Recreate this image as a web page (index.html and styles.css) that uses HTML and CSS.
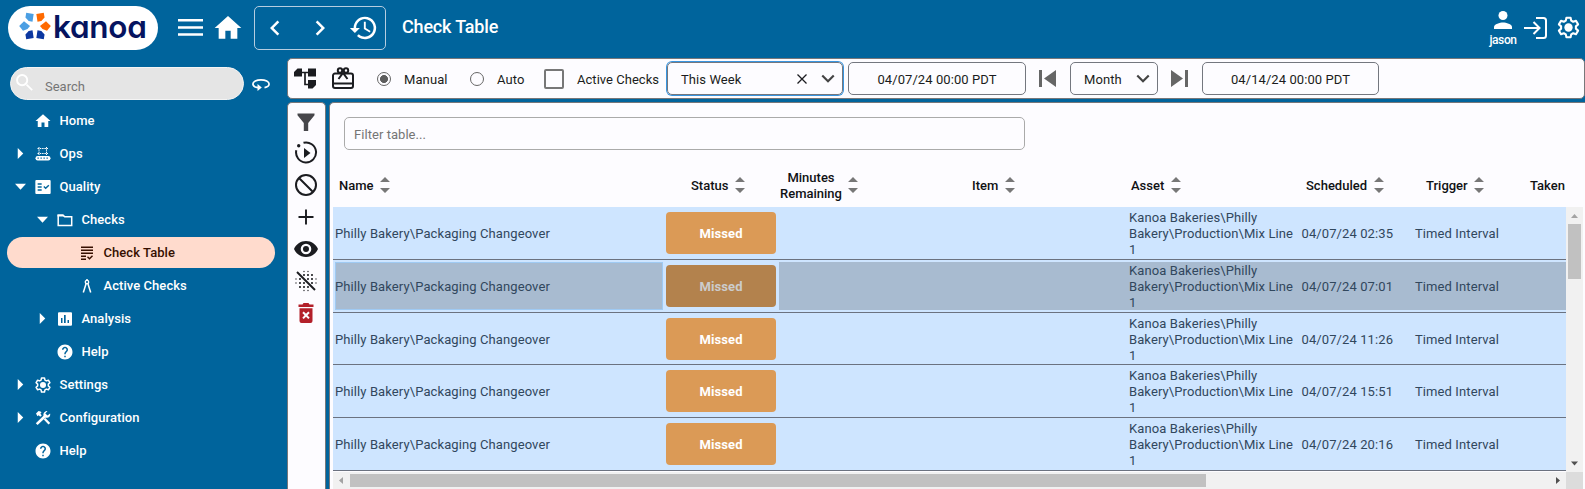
FILE: index.html
```html
<!DOCTYPE html>
<html lang="en">
<head>
<meta charset="utf-8">
<title>Check Table</title>
<link rel="stylesheet" href="styles.css">
</head>
<body>
<svg class="defs" width="0" height="0">
  <symbol id="home" viewBox="0 0 24 24"><path d="M10 20v-6h4v6h5v-8h3L12 3 2 12h3v8z"/></symbol>
  <symbol id="right" viewBox="0 0 24 24"><path d="M8.6 16.6 13.2 12 8.6 7.4 10 6l6 6-6 6z"/></symbol>
  <symbol id="gear" viewBox="0 0 24 24"><path fill="none" stroke="currentColor" stroke-width="2" stroke-linejoin="round" d="M10 2.6h4l.6 2.8 1.9 1.1 2.7-.9 2 3.4-2.1 1.9v2.2l2.1 1.9-2 3.4-2.7-.9-1.9 1.1-.6 2.8h-4l-.6-2.8-1.9-1.1-2.7.9-2-3.4 2.1-1.9v-2.2L2.8 9l2-3.4 2.7.9 1.9-1.1z"/><circle cx="12" cy="12" r="4"/></symbol>
  <symbol id="help" viewBox="0 0 24 24"><path d="M12 2C6.48 2 2 6.48 2 12s4.48 10 10 10 10-4.48 10-10S17.520 2 12 2zm1 17h-2v-2h2v2zm2.070-7.750-.9.920C13.450 12.900 13 13.500 13 15h-2v-.5c0-1.100.45-2.100 1.170-2.830l1.240-1.260c.37-.36.59-.86.59-1.410 0-1.100-.9-2-2-2s-2 .9-2 2H8c0-2.210 1.790-4 4-4s4 1.790 4 4c0 .88-.36 1.680-.93 2.250z"/></symbol>
  <symbol id="down" viewBox="0 0 24 24"><path d="M7.400 8.100 12 12.700l4.600-4.600L18 9.500l-6 6-6-6z"/></symbol>
  <symbol id="sort" viewBox="0 0 10 16"><path d="M0 5 5 0l5 5zM0 11h10l-5 5z"/></symbol>
  <symbol id="prev" viewBox="0 0 17 17"><path d="M0 0h3v17H0zM17 0v17L5 8.500z"/></symbol>
</svg>

<header class="header">
  <div class="logo">
    <svg class="flower" viewBox="-16 -16 32 32">
      <g fill="#ff6a00"><path d="M5 0 11-4.800 15.800 0 12 4.800 7.500 3z"/><path transform="rotate(-60)" d="M5 0 11-4.800 15.800 1 12.200 4 7.500 3z"/></g>
      <g fill="#4b9fe3"><path transform="rotate(-120)" d="M5 0 7.500-3 12.200-4 15.800-1 11 4.800z"/><path transform="rotate(180)" d="M5 0 7.500-3 12-4.800 15.800 0 11 4.800z"/></g>
      <g fill="#0c37a0"><path transform="rotate(120)" d="M5 0 11-4.800 15.800 1 12.200 4 7.500 3z"/><path transform="rotate(60)" d="M5 0 7.500-3 12.200-4 15.800-1 11 4.800z"/></g>
    </svg>
    <span class="brand">kanoa</span>
  </div>
  <svg class="burger" viewBox="0 0 25 17"><path d="M0 0h25v2.500H0zM0 7.200h25v2.500H0zM0 14.300h25v2.500H0z"/></svg>
  <svg class="homebig"><use href="#home"/></svg>
  <nav class="navbox">
    <svg class="chev flip"><use href="#right"/></svg>
    <svg class="chev"><use href="#right"/></svg>
    <svg class="history" viewBox="0 0 24 24"><path d="M13.500 3A9 9 0 0 0 4.500 12H1.500l4 4 4-4H6.500a7 7 0 1 1 2.100 4.900l-1.400 1.500A9 9 0 1 0 13.500 3zM12.700 7v5.800l4.600 2.800.8-1.300-3.900-2.300V7z"/></svg>
  </nav>
  <h1 class="title">Check Table</h1>
  <div class="account">
    <div class="user">
      <svg viewBox="0 0 18 18"><circle cx="9" cy="4.500" r="4.500"/><path d="M0 18v-2c0-3 6-4.500 9-4.500s9 1.500 9 4.500v2z"/></svg>
      <span>jason</span>
    </div>
    <svg class="login" viewBox="0 0 24 24"><path fill="none" stroke="currentColor" stroke-width="2" d="M12 2h7.500a2.500 2.500 0 0 1 2.500 2.500v15a2.500 2.500 0 0 1-2.500 2.500H12M0 12h15M9.500 6l6 6-6 6"/></svg>
    <svg class="gearbig"><use href="#gear"/></svg>
  </div>
</header>

<div class="layout">
  <aside class="sidebar">
    <div class="searchrow">
      <div class="search">
        <svg viewBox="0 0 18 18"><circle cx="6.500" cy="6.500" r="5.400" fill="none" stroke="currentColor" stroke-width="2"/><path d="m10.500 11.800 1.300-1.300 6 6L16.500 17.800z"/></svg>
        <span>Search</span>
      </div>
      <svg class="rotate" viewBox="0 0 18 12"><path fill="none" stroke="currentColor" stroke-width="1.700" d="M12.500 8.600C15.500 8 17.100 6.600 17.100 5c0-2.300-3.600-4.100-8.100-4.100S.9 2.700.9 5c0 1.800 2.300 3.200 5.100 3.700"/><path d="M5.500 5 9.800 8.600 5.500 12z"/></svg>
    </div>
    <ul class="tree">
      <li class="node"><i class="arrow"></i><svg class="ico helpico"><use href="#home"/></svg>Home</li>
      <li class="node"><i class="arrow closed"></i><svg class="ico" viewBox="0 0 16 16"><path fill="none" stroke="currentColor" d="M4 1v8M11.500 1v8M2.500 2.500h10.500M2.500 7.500h10.500" stroke-dasharray="1.500 .8"/><rect x=".5" y="10" width="15" height="4.500" rx="2.200"/><path stroke="#00649c" stroke-width="1.300" stroke-dasharray="1.300 1.700" d="M2.500 12.200h11.500"/></svg>Ops</li>
      <li class="node"><i class="arrow open"></i><svg class="ico" viewBox="0 0 24 24"><path fill-rule="evenodd" d="M2 1.500h20a1.500 1.500 0 0 1 1.500 1.500v18a1.500 1.500 0 0 1-1.500 1.500H2A1.500 1.500 0 0 1 .5 21V3A1.500 1.500 0 0 1 2 1.500zM4 6.500v2h6v-2zM4 11v2h6v-2zM4 15.500v2h6v-2zM12.500 12l3.500 3.500 5.500-5.500-1.500-1.500-4 4-2-2z"/></svg>Quality</li>
      <li class="node l2"><i class="arrow open"></i><svg class="ico" viewBox="0 0 16 16"><path fill="none" stroke="currentColor" stroke-width="1.500" d="M1.200 3.300h5l1.500 1.500h7v8.700H1.200z"/><path d="M.5 2.500h5.600l1.500 2H.5z"/></svg>Checks</li>
      <li class="node l3 selected"><svg class="ico" viewBox="0 0 16 16"><path d="M2 1.500h12V3H2zM2 4.500h12V6H2zM2 7.500h12V9H2zM2 10.500h5V12H2zM2 13.500h5V15H2zM8 12.200l1-1 1.500 1.500L13 10.200l1 1-3.500 3.500z"/></svg>Check Table</li>
      <li class="node l3"><svg class="ico" viewBox="0 0 16 16"><path fill="none" stroke="currentColor" stroke-width="1.500" d="M8 1v2M7.300 5 4.300 14.500M8.700 5l3 9.500"/><circle cx="8" cy="4" r="1.700" fill="none" stroke="currentColor" stroke-width="1.300"/></svg>Active Checks</li>
      <li class="node l2"><i class="arrow closed"></i><svg class="ico" viewBox="0 0 16 16"><path fill-rule="evenodd" d="M2 1.200h12a1 1 0 0 1 1 1v11.600a1 1 0 0 1-1 1H2a1 1 0 0 1-1-1V2.200a1 1 0 0 1 1-1zM4 7v5h1.500V7zM7 4v8h1.700V4zM10.500 9v3H12V9z"/></svg>Analysis</li>
      <li class="node l2"><i class="arrow"></i><svg class="ico helpico"><use href="#help"/></svg>Help</li>
      <li class="node"><i class="arrow closed"></i><svg class="ico helpico"><use href="#gear"/></svg>Settings</li>
      <li class="node"><i class="arrow closed"></i><svg class="ico" viewBox="0 0 16 16"><path d="M1 3.500 3.500 1l2 .5 1 1L5.300 3.700l1.500 1.500-1.600 1.600L3.700 5.200 2.500 6.200zM8.800 9.500l1.600-1.600 4.800 5-1.700 1.700z"/><path d="M.8 13.200 8.500 5.800C8 3.500 9.600.8 12.500 1l-2.200 2.400 2.200 2.200 2.600-2.200c.7 2.800-1.800 5-4.700 4.300L2.600 15z"/></svg>Configuration</li>
      <li class="node"><i class="arrow"></i><svg class="ico helpico"><use href="#help"/></svg>Help</li>
    </ul>
  </aside>

  <main class="content">
    <section class="toolbar">
      <svg class="tb-tree" viewBox="0 0 22 21"><path d="M3.500.5H8v8H0V4zM14 .5h8v8h-8zM14 12h8v5l-3.500 3.500H14z"/><path fill="none" stroke="currentColor" stroke-width="1.700" d="M8 4.500h6M11 4.500v12h3.500"/></svg>
      <svg class="tb-gift" viewBox="0 0 22 22"><path fill="none" stroke="currentColor" stroke-width="2" d="M3 6.500h16a2 2 0 0 1 2 2v10.500a2 2 0 0 1-2 2H3a2 2 0 0 1-2-2V8.500a2 2 0 0 1 2-2zM1 16.500h20M6.500 12 11 6l4.500 6"/><circle cx="8" cy="3.500" r="2.200" fill="none" stroke="currentColor" stroke-width="2"/><circle cx="14" cy="3.500" r="2.200" fill="none" stroke="currentColor" stroke-width="2"/></svg>
      <span class="radio on"></span><span class="lbl manual">Manual</span>
      <span class="radio"></span><span class="lbl auto">Auto</span>
      <span class="box"></span><span class="lbl active">Active Checks</span>
      <div class="field week"><span>This Week</span>
        <svg class="clear" viewBox="0 0 10 10"><path fill="none" stroke="currentColor" stroke-width="1.300" d="m.5.500 9 9m0-9-9 9"/></svg>
        <svg class="dd"><use href="#down"/></svg></div>
      <div class="field date1"><span>04/07/24 00:00 PDT</span></div>
      <svg class="step"><use href="#prev"/></svg>
      <div class="field month"><span>Month</span><svg class="dd"><use href="#down"/></svg></div>
      <svg class="step flip"><use href="#prev"/></svg>
      <div class="field date2"><span>04/14/24 00:00 PDT</span></div>
    </section>

    <div class="work">
      <section class="tools">
        <svg viewBox="0 0 24 24" class="grey"><path d="M3.500 3.500h17v1.700L14.200 13v8H9.800v-8L3.500 5.200z"/></svg>
        <svg viewBox="0 0 24 24"><path fill="none" stroke="currentColor" stroke-width="2" d="M9.500 1.800A10 10 0 1 1 2.300 9.300"/><circle cx="4.700" cy="4.700" r="1.700"/><path d="m10 7 6.500 5-6.500 5z"/></svg>
        <svg viewBox="0 0 24 24"><path fill="none" stroke="currentColor" stroke-width="2" d="M12 2a10 10 0 1 1 0 20 10 10 0 0 1 0-20zM5 5l14 14"/></svg>
        <svg viewBox="0 0 24 24"><path fill="none" stroke="currentColor" stroke-width="1.900" d="M12 4.500v15M4.500 12h15"/></svg>
        <svg viewBox="0 0 24 24"><path fill-rule="evenodd" d="M12 4C6.500 4 2 7.400 0 12c2 4.600 6.500 8 12 8s10-3.400 12-8c-2-4.600-6.500-8-12-8zm0 2.700a5.300 5.300 0 1 1 0 10.600 5.300 5.300 0 0 1 0-10.600zM12 9a3 3 0 1 0 0 6 3 3 0 0 0 0-6z"/></svg>
        <svg viewBox="0 0 24 24"><g fill="none" stroke="currentColor" stroke-linecap="round"><path stroke-width="1.300" stroke-dasharray="0 4" d="M10 2.500h5M2 10h.1M2 14h.1M10 21.500h5M22 10v5"/><path stroke-width="2.100" stroke-dasharray="0 4" d="M10 6h9M6 10v9M14 10h6M18 14h1M10 14h1M10 18h5"/><path stroke-width="1.900" stroke-linecap="butt" d="m3 3 18 18"/></g></svg>
        <svg viewBox="0 0 24 24" class="red"><path fill-rule="evenodd" d="M4.500 3.500h4L9.500 2h5l1 1.500h4V6h-15zM5.500 7.200h13V20a2 2 0 0 1-2 2h-9a2 2 0 0 1-2-2zM9.700 10.500 8.300 12l2.300 2.300-2.300 2.400 1.400 1.400 2.300-2.300 2.300 2.300 1.400-1.400-2.300-2.400L15.700 12l-1.400-1.500-2.300 2.300z"/></svg>
      </section>

      <section class="panel">
        <div class="filter">Filter table...</div>
        <div class="cols thead">
          <div class="th h1">Name<svg><use href="#sort"/></svg></div>
          <div class="th h2">Status<svg><use href="#sort"/></svg></div>
          <div class="th h3"><span>Minutes<br>Remaining</span><svg><use href="#sort"/></svg></div>
          <div class="th h4">Item<svg><use href="#sort"/></svg></div>
          <div class="th h5">Asset<svg><use href="#sort"/></svg></div>
          <div class="th h6">Scheduled<svg><use href="#sort"/></svg></div>
          <div class="th h7">Trigger<svg><use href="#sort"/></svg></div>
          <div class="th h8">Taken</div>
        </div>
        <div class="body">
          <div class="rows">
            <div class="cols row"><div class="td">Philly Bakery\Packaging Changeover</div><div class="td st"><b>Missed</b></div><div class="td"></div><div class="td"></div><div class="td">Kanoa Bakeries\Philly<br>Bakery\Production\Mix Line<br>1</div><div class="td">04/07/24 02:35</div><div class="td">Timed Interval</div><div class="td"></div></div>
            <div class="cols row picked"><div class="td">Philly Bakery\Packaging Changeover</div><div class="td st"><b>Missed</b></div><div class="td"></div><div class="td"></div><div class="td">Kanoa Bakeries\Philly<br>Bakery\Production\Mix Line<br>1</div><div class="td">04/07/24 07:01</div><div class="td">Timed Interval</div><div class="td"></div></div>
            <div class="cols row"><div class="td">Philly Bakery\Packaging Changeover</div><div class="td st"><b>Missed</b></div><div class="td"></div><div class="td"></div><div class="td">Kanoa Bakeries\Philly<br>Bakery\Production\Mix Line<br>1</div><div class="td">04/07/24 11:26</div><div class="td">Timed Interval</div><div class="td"></div></div>
            <div class="cols row"><div class="td">Philly Bakery\Packaging Changeover</div><div class="td st"><b>Missed</b></div><div class="td"></div><div class="td"></div><div class="td">Kanoa Bakeries\Philly<br>Bakery\Production\Mix Line<br>1</div><div class="td">04/07/24 15:51</div><div class="td">Timed Interval</div><div class="td"></div></div>
            <div class="cols row"><div class="td">Philly Bakery\Packaging Changeover</div><div class="td st"><b>Missed</b></div><div class="td"></div><div class="td"></div><div class="td">Kanoa Bakeries\Philly<br>Bakery\Production\Mix Line<br>1</div><div class="td">04/07/24 20:16</div><div class="td">Timed Interval</div><div class="td"></div></div>
          </div>
          <div class="vbar"><svg class="light" viewBox="0 0 17 17"><path d="M5 11h7L8.500 7z"/></svg><div class="vthumb"></div><svg class="end" viewBox="0 0 17 17"><path d="M5 6.500h7l-3.500 4z"/></svg></div>
          <div class="hbar"><svg class="light" viewBox="0 0 17 17"><path d="M10 5v7L6 8.500z"/></svg><div class="hthumb"></div><svg class="end" viewBox="0 0 17 17"><path d="M7 5v7l4-3.500z"/></svg></div>
          <div class="corner"></div>
        </div>
      </section>
    </div>
  </main>
</div>
</body>
</html>
```
FILE: styles.css
```css
* { box-sizing: border-box; }
body { margin: 0; width: 1585px; height: 489px; overflow: hidden; background: #00649c; font: 13px/16px Roboto, sans-serif; color: #1b1c20; }
svg { display: block; flex: none; fill: currentColor; }
.defs { position: absolute; }
.flip { transform: scaleX(-1); }

.header { display: flex; align-items: center; height: 58px; padding: 0 5px 3px 8px; color: #fff; }
.logo { display: flex; align-items: center; width: 150px; height: 44px; border-radius: 22px; background: #fff; padding-left: 11px; }
.flower { width: 32px; height: 32px; margin-top: -3px; }
.brand { font: 600 31.500px/32px Inter, sans-serif; font-feature-settings: "cv11"; color: #06145f; margin-left: 2px; margin-top: -1px; letter-spacing: -.3px; }
.burger { width: 25px; height: 17px; margin-left: 20px; }
.homebig { width: 32px; height: 32px; margin-left: 9px; }
.navbox { display: flex; align-items: center; width: 132px; height: 44px; margin-left: 10px; border: 1px solid #b5cde0; border-radius: 5px; padding-left: 5px; }
.chev { width: 30px; height: 30px; margin-right: 14.500px; }
.history { width: 30px; height: 30px; margin-left: -1px; }
.title { margin: -2px 0 0 16px; font-size: 18px; line-height: 24px; font-weight: 500; letter-spacing: -.18px; }
.account { display: flex; align-items: center; margin-left: auto; }
.user { width: 28px; display: flex; flex-direction: column; align-items: center; font-size: 12px; line-height: 14px; font-weight: 500; margin-right: 7px; letter-spacing: -.4px; }
.user svg { width: 18px; height: 18px; margin: 3px 0 4px; }
.login { width: 24px; height: 24px; margin-right: 8px; }
.gearbig { width: 25px; height: 25px; margin-right: -1px; }

.layout { display: flex; height: 431px; }
.sidebar { width: 287px; flex: none; color: #fff; }
.searchrow { display: flex; align-items: center; padding: 9px 0 0 10px; }
.search { display: flex; align-items: center; width: 234px; height: 33px; border-radius: 17px; border: 1px solid #f4f4f4; background: #e5e5e5; padding-left: 5px; }
.search svg { width: 17px; height: 17px; margin-top: -2px; }
.search span { color: #757575; margin: 7px 0 0 12px; }
.rotate { width: 18px; height: 12px; margin-left: 8px; margin-top: 3px; }
.tree { list-style: none; margin: 4px 0 0; padding: 0; }
.node { display: flex; align-items: center; height: 33px; padding-left: 15px; font-weight: 500; letter-spacing: .06px; }
.node.l2 { padding-left: 37px; }
.node.l3 { padding-left: 79px; }
.ico { width: 16px; height: 16px; margin-right: 8.500px; }
.helpico { width: 18px; height: 18px; margin: 0 7.500px 0 -1px; }
.arrow { width: 11px; height: 11px; margin-right: 9px; }
.closed { clip-path: polygon(25% 0, 75% 50%, 25% 100%); background: #fff; }
.open { clip-path: polygon(0 25%, 100% 25%, 50% 80%); background: #fff; }
.node.selected { width: 268px; height: 31px; margin: 1px 0 1px 7px; padding-left: 72px; border-radius: 16px; background: #ffdbcd; color: #360f00; }

.content { flex: 1; min-width: 0; }
.toolbar { display: flex; align-items: center; height: 41px; border: 1px solid #77777a; border-radius: 5px; background: #fdfcff; padding-left: 6px; }
.tb-tree { width: 22px; height: 21px; }
.tb-gift { width: 22px; height: 22px; margin-left: 16px; margin-top: -2px; }
.radio { width: 14px; height: 14px; border: 1px solid #666; border-radius: 50%; margin-left: 23px; flex: none; }
.radio.on { background: radial-gradient(circle, #5e5e5e 0 3.700px, transparent 4.200px); }
.lbl { white-space: nowrap; margin-left: 13px; margin-top: 2px; letter-spacing: .1px; }
.manual { width: 43px; }
.auto { width: 28px; }
.active { width: 83px; letter-spacing: .03px; }
.box { width: 20px; height: 20px; border: 2px solid #777; border-radius: 2px; margin-left: 19px; flex: none; }
.field { display: flex; align-items: center; height: 33px; border: 1px solid #74777f; border-radius: 5px; flex: none; letter-spacing: .08px; white-space: nowrap; }
.field > span { margin-top: 2px; }
.week { width: 176px; height: 33px; margin-left: 7px; padding-left: 13px; box-shadow: 0 0 0 1px #3995df; }
.clear { width: 10px; height: 10px; margin-left: auto; }
.dd { width: 26px; height: 26px; color: #444; }
.week .dd { margin: 0 1px 0 8px; }
.date1 { width: 178px; margin-left: 5px; justify-content: center; }
.step { width: 17px; height: 17px; margin-left: 13px; color: #666; }
.month { width: 88px; margin-left: 14px; padding-left: 13px; }
.month .dd { margin-left: auto; margin-right: 1px; }
.date2 { width: 177px; margin-left: 14px; justify-content: center; }

.work { display: flex; gap: 3px; height: 387px; margin-top: 3px; }
.tools, .panel { background: #fdfcff; border: 1px solid #77777a; border-bottom: 0; border-radius: 5px 5px 0 0; }
.tools { display: flex; flex-direction: column; align-items: center; width: 39px; gap: 8px; padding: 6px 1px 0 0; flex: none; }
.tools svg { width: 24px; height: 24px; }
.tools .grey { color: #46464a; margin: 1px 0 -1px; }
.red { color: #b3202a; }
.panel { flex: 1; min-width: 0; padding-left: 3px; border-right: 0; border-top-right-radius: 0; overflow: hidden; }
.filter { width: 681px; height: 33px; margin: 14px 0 0 11px; border: 1px solid #aaa; border-radius: 5px; color: #757575; padding: 9px 9px 0; letter-spacing: .05px; }
.cols { display: grid; grid-template-columns: 331px 115px 83px 265px 172px 114px 107px 46px; width: 1233px; }
.thead { height: 57px; font-weight: 500; color: #101114; padding-top: 14px; }
.th { display: flex; align-items: center; white-space: nowrap; text-align: center; }
.th svg { width: 10px; height: 16px; margin: -2px 0 0 6.500px; color: #777; }
.h1 { padding-left: 6px; }
.h2 { padding-left: 27px; }
.h3 { padding-left: 1px; }
.h4 { padding-left: 110px; }
.h5 { padding-left: 4px; }
.h6 { padding-left: 7px; }
.h7 { padding-left: 13px; }
.h8 { padding-left: 10px; }
.body { display: grid; grid-template: 264.750px 17px / 1233px 17px; }
.rows { overflow: hidden; }
.row { height: 52.750px; grid-template-rows: 47.750px; background: #cee5ff; border-bottom: 1px solid #6b7280; padding: 2px 0; color: #31475d; }
.td { display: flex; align-items: center; padding: 2.500px 0 0 2px; white-space: nowrap; letter-spacing: .1px; }
.td:nth-child(6) { padding-left: 2.500px; }
.td.st { padding: .300px 2px 0; }
.st b { width: 110px; height: 42px; display: flex; align-items: center; justify-content: center; border-radius: 4px; background: #db9a56; color: #fff; padding-top: 2px; }
.picked .td { background: #a8bbd0; }
.picked .td:first-child { border: 1px solid #9fcaf3; margin: 0 1px 0 2px; padding: 2.500px 0 0; text-indent: -1px; }
.picked .td.st { background: none; }
.picked .st b { background: #b3824d; color: #ccc; }
.vbar { background: #f1f1f1; display: flex; flex-direction: column; color: #505050; }
.vbar svg, .hbar svg { width: 17px; height: 17px; }
.vbar .light, .hbar .light { color: #a3a3a3; }
.vthumb { width: 13px; height: 55px; margin-left: 2px; background: #c1c1c1; }
.vbar .end { margin-top: auto; }
.hbar { background: #f1f1f1; display: flex; color: #505050; }
.hthumb { width: 856px; height: 13px; margin-top: 2px; background: #c1c1c1; }
.hbar .end { margin-left: auto; }
.corner { background: #dcdcdc; }
```
